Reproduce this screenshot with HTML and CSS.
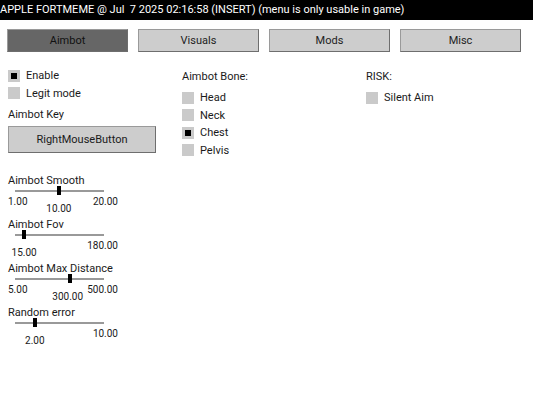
FILE: index.html
```html
<!DOCTYPE html>
<html lang="en">
<head>
  <meta charset="UTF-8">
  <title>Menu</title>
  <link rel="stylesheet" href="styles.css">
</head>
<body>

  <div class="titlebar">APPLE FORTMEME @ Jul&nbsp;&nbsp;7 2025 02:16:58 (INSERT) (menu is only usable in game)</div>

  <div class="tabs">
    <div class="tab active">Aimbot</div>
    <div class="tab">Visuals</div>
    <div class="tab">Mods</div>
    <div class="tab">Misc</div>
  </div>

  <div class="panel">
    <div class="col">
      <div class="check"><span class="box on"></span>Enable</div>
      <div class="check"><span class="box"></span>Legit mode</div>
      <div class="label key-label">Aimbot Key</div>
      <div class="keybtn">RightMouseButton</div>

      <div class="sliders">
        <div class="slider">
          <div class="label">Aimbot Smooth</div>
          <div class="track"><span class="thumb" style="left: 47%"></span></div>
          <div class="values">
            <span>1.00</span>
            <span>20.00</span>
            <div class="cur-rail"><span class="cur" style="left: 47%">10.00</span></div>
          </div>
        </div>
        <div class="slider">
          <div class="label">Aimbot Fov</div>
          <div class="track"><span class="thumb" style="left: 8%"></span></div>
          <div class="values">
            <span></span>
            <span>180.00</span>
            <div class="cur-rail"><span class="cur" style="left: 8%">15.00</span></div>
          </div>
        </div>
        <div class="slider">
          <div class="label">Aimbot Max Distance</div>
          <div class="track"><span class="thumb" style="left: 59%"></span></div>
          <div class="values">
            <span>5.00</span>
            <span>500.00</span>
            <div class="cur-rail"><span class="cur" style="left: 57%">300.00</span></div>
          </div>
        </div>
        <div class="slider">
          <div class="label">Random error</div>
          <div class="track"><span class="thumb" style="left: 20%"></span></div>
          <div class="values">
            <span></span>
            <span>10.00</span>
            <div class="cur-rail"><span class="cur" style="left: 20%">2.00</span></div>
          </div>
        </div>
      </div>
    </div>

    <div class="col">
      <div class="label head">Aimbot Bone:</div>
      <div class="check"><span class="box"></span>Head</div>
      <div class="check"><span class="box"></span>Neck</div>
      <div class="check"><span class="box on"></span>Chest</div>
      <div class="check"><span class="box"></span>Pelvis</div>
    </div>

    <div class="col">
      <div class="label head">RISK:</div>
      <div class="check"><span class="box"></span>Silent Aim</div>
    </div>
  </div>

</body>
</html>
```

FILE: styles.css
```css
body {
  margin: 0;
  background: #fff;
  font-family: Roboto, "Liberation Sans", sans-serif;
  font-size: 11px;
  color: #1a1a1a;
}
.titlebar {
  background: #000;
  color: #fff;
  height: 20px;
  line-height: 20px;
  font-size: 11px;
  white-space: nowrap;
}
.tabs {
  display: grid;
  grid-template-columns: repeat(4, 121px);
  column-gap: 10px;
  padding: 9px 0 0 7px;
}
.tab {
  height: 21px;
  line-height: 21px;
  text-align: center;
  background: #cdcdcd;
  border: 1px solid #9a9a9a;
  border-right-color: #6e6e6e;
  border-bottom-color: #6e6e6e;
  color: #222;
}
.tab.active { background: #666; color: #111; }

.panel {
  display: grid;
  grid-template-columns: 174px 184px auto;
  padding: 15px 0 0 8px;
}
.check {
  display: flex;
  align-items: center;
  height: 17.5px;
}
.box {
  width: 12px; height: 12px;
  background: #cacaca;
  margin-right: 6px;
  display: flex;
  align-items: center;
  justify-content: center;
}
.box.on::after {
  content: "";
  width: 6px; height: 6px;
  background: #000;
}
.label { line-height: 14px; }
.head { margin: 3px 0 5px; }
.key-label { margin-top: 6px; }
.keybtn {
  width: 146px; height: 25px;
  margin-top: 4px;
  line-height: 25px;
  text-align: center;
  background: #cdcdcd;
  border: 1px solid #9a9a9a;
  border-right-color: #6e6e6e;
  border-bottom-color: #6e6e6e;
}
.sliders { margin-top: 21px; }
.slider { width: 110px; height: 44px; }
.track {
  position: relative;
  margin: 2px 0 0 7px;
  width: 89px;
  height: 2px;
  background: #999;
}
.thumb {
  position: absolute;
  top: -4px;
  width: 4px; height: 9px;
  background: #000;
}
.values {
  position: relative;
  display: flex;
  justify-content: space-between;
  margin-top: 4px;
  font-size: 10px;
}
.cur-rail {
  position: absolute;
  top: 7px;
  left: 9px;
  width: 89px;
}
.cur {
  position: absolute;
  top: 0;
  transform: translateX(-50%);
  white-space: nowrap;
}
```
